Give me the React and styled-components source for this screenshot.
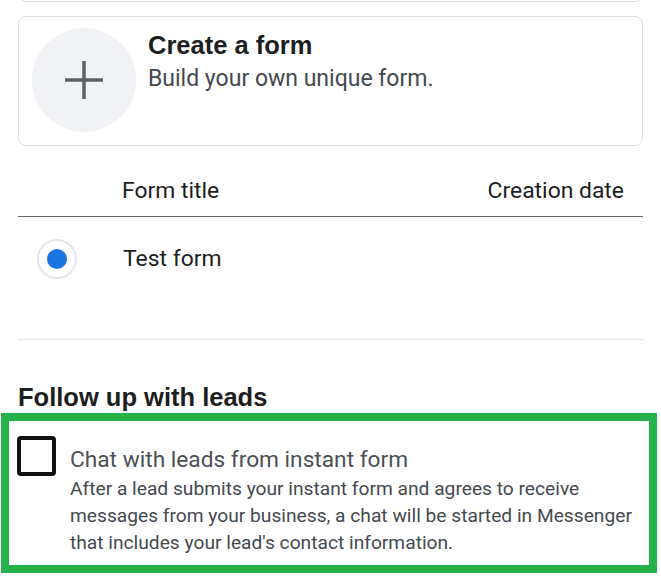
import styled, { createGlobalStyle } from "styled-components";

const GlobalStyle = createGlobalStyle`
  body {
    margin: 0;
    background: #fff;
    font-family: Roboto, "Liberation Sans", Arial, sans-serif;
    color: #1c1e21;
  }
`;

export default function App() {
  return (
    <>
      <GlobalStyle />
      <Page>
        <PrevCardEdge />
        <CreateCard>
          <PlusCircle>
            <svg width="38" height="38" viewBox="0 0 38 38">
              <path d="M19 1v36M1 19h36" stroke="#5b5f66" strokeWidth="3.5" strokeLinecap="round" />
            </svg>
          </PlusCircle>
          <CreateText>
            <CardTitle>Create a form</CardTitle>
            <CardSubtitle>Build your own unique form.</CardSubtitle>
          </CreateText>
        </CreateCard>

        <TableHead>
          <span>Form title</span>
          <span>Creation date</span>
        </TableHead>
        <TableBody>
          <FormRow>
            <Radio $checked />
            <span>Test form</span>
          </FormRow>
        </TableBody>

        <SectionTitle>Follow up with leads</SectionTitle>
        <Highlight>
          <CheckBox />
          <OptionText>
            <OptionTitle>Chat with leads from instant form</OptionTitle>
            <OptionDesc>
              After a lead submits your instant form and agrees to receive<br />
              messages from your business, a chat will be started in Messenger<br />
              that includes your lead's contact information.
            </OptionDesc>
          </OptionText>
        </Highlight>
      </Page>
    </>
  );
}

const Page = styled.div`
  width: 625px;
  padding: 0 18px;
  display: flex;
  flex-direction: column;
`;

const PrevCardEdge = styled.div`
  height: 8px;
  margin-top: -7px;
  border: 1px solid #dadde1;
  border-top: none;
  border-radius: 0 0 8px 8px;
`;

const CreateCard = styled.div`
  margin-top: 14px;
  height: 106px;
  padding: 11px 13px;
  border: 1px solid #dadde1;
  border-radius: 8px;
  display: flex;
  align-items: flex-start;
  gap: 12px;
`;

const PlusCircle = styled.div`
  width: 104px;
  height: 104px;
  flex: none;
  border-radius: 50%;
  background: #f0f2f5;
  display: flex;
  align-items: center;
  justify-content: center;
`;

const CreateText = styled.div`
  margin-top: 3px;
  display: flex;
  flex-direction: column;
`;

const CardTitle = styled.div`
  font-family: "Liberation Sans", Arial, sans-serif;
  font-size: 25.5px;
  line-height: 28px;
  font-weight: 700;
  color: #1c1e21;
`;

const CardSubtitle = styled.div`
  margin-top: 6px;
  font-size: 23px;
  line-height: 28px;
  color: #444950;
`;

const TableHead = styled.div`
  margin-top: 29px;
  padding: 0 19px 9px 104px;
  display: flex;
  justify-content: space-between;
  font-size: 22.9px;
  line-height: 32px;
  color: #1c1e21;
  border-bottom: 1.5px solid #606770;
`;

const TableBody = styled.div`
  padding-bottom: 39px;
  border-bottom: 1px solid #e4e6eb;
`;

const FormRow = styled.div`
  height: 83px;
  padding-left: 19px;
  display: flex;
  align-items: center;
  gap: 46px;
  font-size: 22.9px;
  line-height: 32px;
  color: #1c1e21;
`;

const Radio = styled.div`
  width: 36px;
  height: 36px;
  flex: none;
  border-radius: 50%;
  border: 2px solid #e4e6eb;
  display: flex;
  align-items: center;
  justify-content: center;

  &::after {
    content: "";
    width: 20px;
    height: 20px;
    border-radius: 50%;
    background: ${(p) => (p.$checked ? "#1b74e4" : "transparent")};
  }
`;

const SectionTitle = styled.div`
  margin-top: 41px;
  font-family: "Liberation Sans", Arial, sans-serif;
  font-size: 25.5px;
  line-height: 32px;
  font-weight: 700;
  color: #1c1e21;
`;

const Highlight = styled.div`
  margin: 0 -14px 0 -17px;
  padding: 15px 8px 9px 8px;
  border: 8px solid #25b24b;
  display: flex;
  align-items: flex-start;
  gap: 14px;
`;

const CheckBox = styled.div`
  width: 31px;
  height: 32px;
  flex: none;
  border: 4px solid #111;
  border-radius: 4px;
`;

const OptionText = styled.div`
  margin-top: 10px;
  display: flex;
  flex-direction: column;
`;

const OptionTitle = styled.div`
  font-size: 22.7px;
  line-height: 28px;
  color: #4b4f56;
`;

const OptionDesc = styled.div`
  margin-top: 1px;
  font-size: 19.2px;
  line-height: 27px;
  color: #444950;
`;
